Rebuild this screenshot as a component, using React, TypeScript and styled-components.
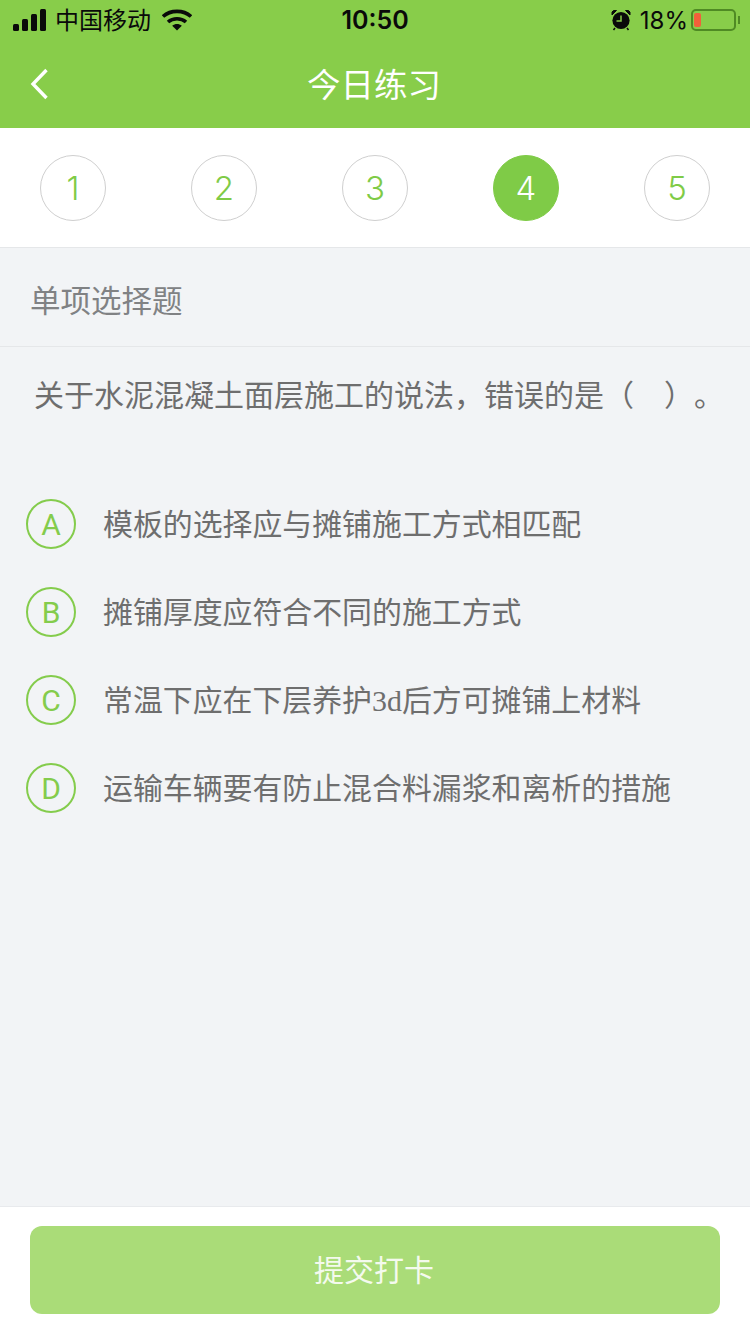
import styled, { createGlobalStyle } from "styled-components";

const GlobalStyle = createGlobalStyle`
  html, body {
    margin: 0;
    padding: 0;
  }
  * {
    box-sizing: border-box;
  }
  body {
    font-family: "Liberation Sans", "Noto Sans CJK SC", sans-serif;
  }
`;

const steps = [1, 2, 3, 4, 5];
const activeStep = 4;

const App = () => {
  const options = [
    { key: "A", text: <>模板的选择应与摊铺施工方式相匹配</> },
    { key: "B", text: <>摊铺厚度应符合不同的施工方式</> },
    {
      key: "C",
      text: (
        <>
          常温下应在下层养护<SerifText>3d</SerifText>后方可摊铺上材料
        </>
      ),
    },
    { key: "D", text: <>运输车辆要有防止混合料漏浆和离析的措施</> },
  ];

  return (
    <Page>
      <GlobalStyle />
      <TopBar>
        <StatusBar>
          <StatusLeft>
            <svg width="35" height="22" viewBox="0 0 35 22">
              <rect x="0" y="15" width="6" height="7" rx="1.5" fill="#0a0a0a" />
              <rect x="9" y="10" width="6" height="12" rx="1.5" fill="#0a0a0a" />
              <rect x="18" y="5" width="6" height="17" rx="1.5" fill="#0a0a0a" />
              <rect x="27" y="0" width="6" height="22" rx="1.5" fill="#0a0a0a" />
            </svg>
            <Carrier>中国移动</Carrier>
            <svg width="30" height="22" viewBox="0 0 30 22">
              <path d="M1 7.5C8.5 .6 21.5 .6 29 7.5" fill="none" stroke="#0a0a0a" strokeWidth="3.6" />
              <path d="M6 13C11 8.6 19 8.6 24 13" fill="none" stroke="#0a0a0a" strokeWidth="3.6" />
              <path d="M10.2 16.8C13 14.5 17 14.5 19.8 16.8L15 21.5Z" fill="#0a0a0a" />
            </svg>
          </StatusLeft>
          <Clock>10:50</Clock>
          <StatusRight>
            <svg width="20" height="22" viewBox="0 0 20 22">
              <circle cx="10" cy="11.5" r="8.6" fill="#0a0a0a" />
              <path d="M10 6.5V12H5.5" fill="none" stroke="#88cd4a" strokeWidth="1.5" />
              <path d="M1 6L5.5 1.5H2.5L1 3ZM19 6L14.5 1.5H17.5L19 3Z" fill="#0a0a0a" stroke="#0a0a0a" />
              <path d="M4 19L2.5 21M16 19L17.5 21" stroke="#0a0a0a" strokeWidth="1.5" />
            </svg>
            <Percent>18%</Percent>
            <Battery>
              <BatteryLevel />
            </Battery>
            <BatteryCap />
          </StatusRight>
        </StatusBar>
        <NavBar>
          <BackIcon width="20" height="34" viewBox="0 0 20 34">
            <path d="M18.5 3L5 17L18.5 31" fill="none" stroke="#fff" strokeWidth="3.4" />
          </BackIcon>
          <Title>今日练习</Title>
        </NavBar>
      </TopBar>

      <StepRow>
        {steps.map((step) => (
          <Step key={step} $active={step === activeStep}>
            {step}
          </Step>
        ))}
      </StepRow>

      <Content>
        <QuestionType>单项选择题</QuestionType>
        <Question>关于水泥混凝土面层施工的说法，错误的是（　）。</Question>
        <OptionList>
          {options.map((option) => (
            <Option key={option.key}>
              <OptionBadge>{option.key}</OptionBadge>
              <OptionText>{option.text}</OptionText>
            </Option>
          ))}
        </OptionList>
      </Content>

      <Footer>
        <SubmitButton>提交打卡</SubmitButton>
      </Footer>
    </Page>
  );
};

const Page = styled.div`
  width: 750px;
  height: 1334px;
  display: flex;
  flex-direction: column;
  overflow: hidden;
  background-color: #f2f4f6;
`;

const TopBar = styled.header`
  height: 128px;
  background-color: #88cd4a;
`;

const StatusBar = styled.div`
  position: relative;
  height: 42px;
  display: flex;
  justify-content: space-between;
  align-items: center;
  padding: 0 10px 2px 13px;
  color: #0a0a0a;
`;

const StatusLeft = styled.div`
  display: flex;
  align-items: center;
`;

const Carrier = styled.span`
  margin: 0 11px 4px 7px;
  font-size: 24px;
  font-weight: 400;
`;

const Clock = styled.span`
  position: absolute;
  left: 0;
  right: 0;
  text-align: center;
  font-size: 25px;
  font-weight: 600;
  font-family: Inter, sans-serif;
`;

const StatusRight = styled.div`
  display: flex;
  align-items: center;
`;

const Percent = styled.span`
  margin: 0 3px 0 9px;
  font-size: 24px;
  font-family: Inter, sans-serif;
  font-weight: 400;
`;

const Battery = styled.div`
  width: 45px;
  height: 22px;
  padding: 2px 3px 2px 1px;
  border: 2px solid #4f8a24;
  border-radius: 5px;
`;

const BatteryLevel = styled.div`
  width: 7px;
  height: 100%;
  border-radius: 2px;
  background-color: #f2603a;
`;

const BatteryCap = styled.div`
  width: 2px;
  height: 8px;
  margin-left: 2px;
  background-color: #4f8a24;
`;

const NavBar = styled.div`
  position: relative;
  height: 86px;
  display: flex;
  justify-content: center;
  align-items: center;
`;

const BackIcon = styled.svg`
  position: absolute;
  left: 28px;
  top: 25px;
`;

const Title = styled.h1`
  margin: 0 2px 6px 0;
  font-size: 33.5px;
  font-weight: 400;
  color: #fff;
`;

const StepRow = styled.div`
  height: 120px;
  display: flex;
  justify-content: space-between;
  align-items: center;
  padding: 1px 40px 0;
  background-color: #fff;
  border-bottom: 1px solid #e5e7e9;
`;

const Step = styled.div<{ $active: boolean }>`
  width: 66px;
  height: 66px;
  display: flex;
  justify-content: center;
  align-items: center;
  border-radius: 50%;
  border: 1px solid ${(p) => (p.$active ? "#7fcb47" : "#cfcfcf")};
  font-family: Inter, sans-serif;
  font-size: 33px;
  font-weight: 300;
  color: ${(p) => (p.$active ? "#fff" : "#7fcb47")};
  background-color: ${(p) => (p.$active ? "#7fcb47" : "#fff")};
`;

const Content = styled.main`
  flex: 1;
`;

const QuestionType = styled.div`
  height: 99px;
  display: flex;
  align-items: center;
  padding: 4px 0 0 30px;
  border-bottom: 1px solid #e5e7e9;
  font-size: 30.5px;
  color: #808284;
`;

const Question = styled.p`
  margin: 0;
  padding: 29px 0 0 34px;
  font-size: 30px;
  line-height: 40px;
  white-space: nowrap;
  text-spacing-trim: space-all;
  color: #6e6e6e;
`;

const OptionList = styled.div`
  margin-top: 83px;
  display: flex;
  flex-direction: column;
  gap: 38px;
  padding-left: 26px;
`;

const Option = styled.div`
  height: 50px;
  display: flex;
  align-items: center;
  gap: 27px;
`;

const OptionBadge = styled.div`
  width: 50px;
  height: 50px;
  display: flex;
  justify-content: center;
  align-items: center;
  border-radius: 50%;
  border: 2px solid #84cc4c;
  font-family: Roboto, sans-serif;
  font-size: 30px;
  font-weight: 400;
  color: #84cc4c;
`;

const OptionText = styled.span`
  margin-bottom: 4px;
  font-size: 29.9px;
  font-family: "Noto Sans CJK SC", sans-serif;
  color: #6e6e6e;
`;

const SerifText = styled.span`
  font-family: "Liberation Serif", serif;
`;

const Footer = styled.footer`
  height: 128px;
  padding: 19px 30px 0;
  background-color: #fff;
  border-top: 1px solid #e8eaed;
`;

const SubmitButton = styled.button`
  width: 100%;
  height: 88px;
  border: none;
  border-radius: 12px;
  padding: 0 2px 5px 0;
  font-family: "Noto Sans CJK SC", sans-serif;
  font-size: 30px;
  color: #f4faee;
  background-color: #aadc78;
`;

export default App;
